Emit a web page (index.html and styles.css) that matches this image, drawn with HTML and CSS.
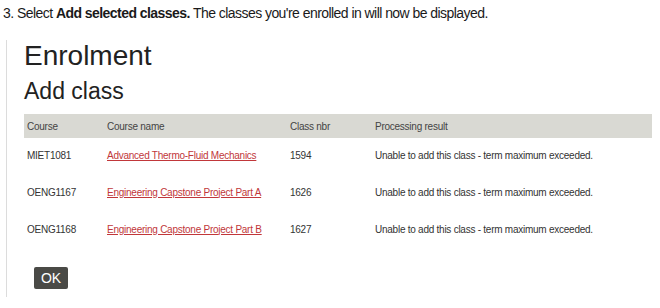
FILE: index.html
```html
<!DOCTYPE html>
<html lang="en">
<head>
    <meta charset="UTF-8">
    <meta name="viewport" content="width=device-width, initial-scale=1.0">
    <title>Enrolment - Add class</title>
    <link rel="stylesheet" href="styles.css">
</head>
<body>
    <p class="step">3. Select <b>Add selected classes.</b> The classes you're enrolled in will now be displayed.</p>

    <div class="panel">
        <h1>Enrolment</h1>
        <h2>Add class</h2>

        <table class="results">
            <thead>
                <tr>
                    <th class="c-course">Course</th>
                    <th class="c-name">Course name</th>
                    <th class="c-nbr">Class nbr</th>
                    <th>Processing result</th>
                </tr>
            </thead>
            <tbody>
                <tr>
                    <td>MIET1081</td>
                    <td><a href="#">Advanced Thermo-Fluid Mechanics</a></td>
                    <td>1594</td>
                    <td>Unable to add this class - term maximum exceeded.</td>
                </tr>
                <tr>
                    <td>OENG1167</td>
                    <td><a href="#">Engineering Capstone Project Part A</a></td>
                    <td>1626</td>
                    <td>Unable to add this class - term maximum exceeded.</td>
                </tr>
                <tr>
                    <td>OENG1168</td>
                    <td><a href="#">Engineering Capstone Project Part B</a></td>
                    <td>1627</td>
                    <td>Unable to add this class - term maximum exceeded.</td>
                </tr>
            </tbody>
        </table>

        <button class="ok">OK</button>
    </div>
</body>
</html>
```

FILE: styles.css
```css
* {
    padding: 0px;
    margin: 0px;
    box-sizing: border-box;
}
body {
    font-family: "Liberation Sans", Arial, sans-serif;
    color: #222;
    background: #fff;
}
.step {
    font-size: 14px;
    letter-spacing: -0.55px;
    line-height: 18px;
    padding: 4px 0 0 3px;
    color: #1a1a1a;
}
.panel {
    margin: 18px 0 0 6px;
    border-left: 1px solid #dcdcdc;
    padding: 0 9px 10px 17px;
    height: 257px;
}
h1 {
    font-weight: normal;
    font-size: 28px;
    line-height: 32px;
    color: #222;
}
h2 {
    font-weight: normal;
    font-size: 23px;
    line-height: 28px;
    margin-top: 5px;
    color: #222;
}
.results {
    width: 628px;
    border-collapse: collapse;
    margin-top: 9px;
    font-size: 10px;
    letter-spacing: -0.25px;
    color: #333;
}
.results th {
    background: #d9d9d3;
    font-weight: normal;
    text-align: left;
    height: 24px;
    padding: 0 0 0 3px;
    color: #444;
}
.results td {
    height: 37px;
    padding: 0 0 3px 3px;
}
.c-course {
    width: 80px;
}
.c-name {
    width: 183px;
}
.c-nbr {
    width: 85px;
}
.results a {
    color: #c1373a;
    text-decoration: underline;
}
.ok {
    margin: 18px 0 0 10px;
    width: 34px;
    height: 22px;
    border: none;
    border-radius: 2px;
    background: #4a4a46;
    color: #fff;
    font-family: "Liberation Sans", Arial, sans-serif;
    font-size: 14px;
    cursor: pointer;
}
```
